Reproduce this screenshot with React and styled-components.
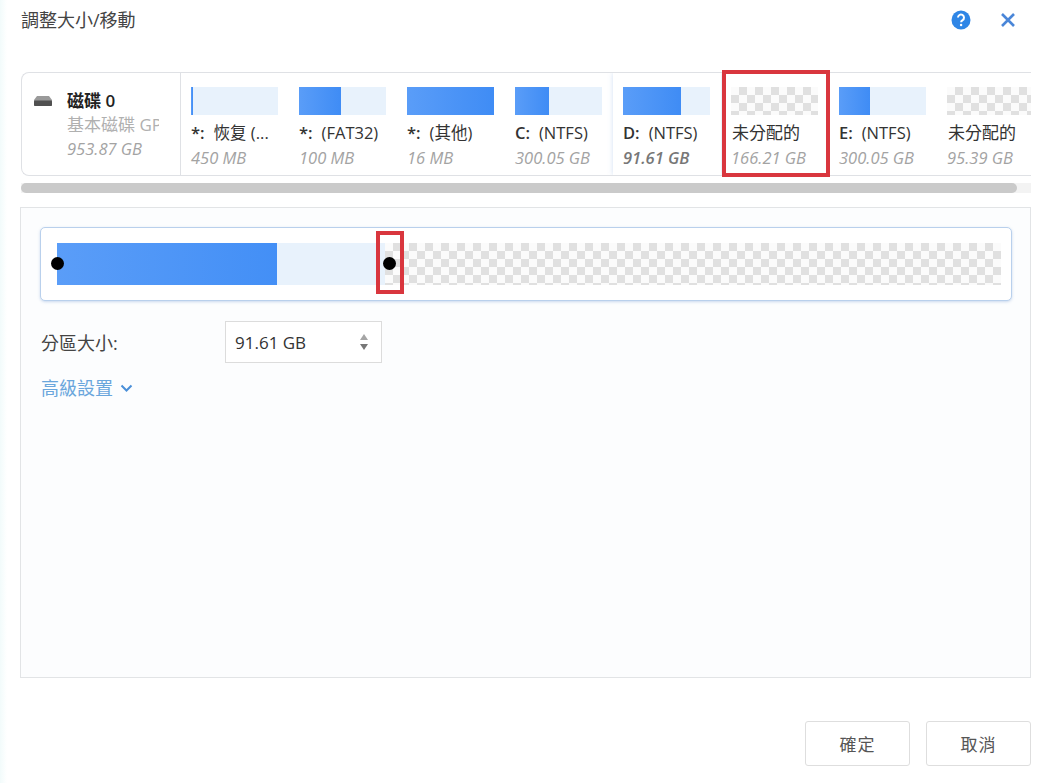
import React from "react";
import styled, { createGlobalStyle, css } from "styled-components";

const GlobalStyle = createGlobalStyle`
  html, body {
    margin: 0;
    padding: 0;
    background: #fff;
  }
  body {
    font-family: "Open Sans", "Noto Sans CJK TC", sans-serif;
    color: #333;
  }
`;

const checker = css`
  background-color: #fff;
  background-image: conic-gradient(#e0e0e0 25%, #fbfbfb 0 50%, #e0e0e0 0 75%, #fbfbfb 0);
  background-size: 16px 16px;
`;

const Page = styled.div`
  width: 1051px;
  height: 783px;
  box-sizing: border-box;
  padding: 0 20px 0 20px;
  display: flex;
  flex-direction: column;
  overflow: hidden;
  background: linear-gradient(90deg, #f2fbfb 0, #ffffff 7px);
`;

const Header = styled.div`
  height: 72px;
  flex: none;
  display: flex;
  justify-content: space-between;
  align-items: flex-start;
  padding-left: 1px;
`;

const Title = styled.div`
  font-size: 18px;
  line-height: 24px;
  margin-top: 8px;
  color: #444;
`;

const HeaderIcons = styled.div`
  display: flex;
  align-items: center;
  gap: 29px;
  margin-top: 10px;
  padding-right: 15px;
`;

const Strip = styled.div`
  flex: none;
  height: 104px;
  margin-left: 1px;
  box-sizing: border-box;
  display: flex;
  border: 1px solid #dfe1e5;
  border-right: none;
  border-radius: 8px 0 0 8px;
  background: #fff;
  overflow: visible;
  position: relative;
`;

const DiskCell = styled.div`
  flex: none;
  width: 159px;
  box-sizing: border-box;
  border-right: 1px solid #dfe1e5;
  display: flex;
  padding: 16px 0 0 12px;
  gap: 15px;
`;

const DiskIcon = styled.svg`
  flex: none;
  margin-top: 7px;
`;

const DiskText = styled.div`
  min-width: 0;
  width: 92px;
  overflow: hidden;
`;

const DiskName = styled.div`
  font-size: 17px;
  line-height: 24px;
  font-weight: 600;
  color: #222;
  white-space: nowrap;
`;

const DiskType = styled.div`
  font-size: 17px;
  line-height: 24px;
  color: #b0b0b0;
  white-space: nowrap;
`;

const DiskSize = styled.div`
  font-size: 16.5px;
  line-height: 24px;
  font-style: italic;
  color: #a3a3a3;
  white-space: nowrap;
`;

const Parts = styled.div`
  flex: 1;
  min-width: 0;
  display: flex;
  overflow: hidden;
`;

const PartCell = styled.div`
  flex: none;
  width: 108px;
  box-sizing: border-box;
  padding: 14px 0 0 10px;
  position: relative;
  ${(p) =>
    p.$selected &&
    css`
      box-shadow: 0 0 5px rgba(120, 160, 220, 0.35);
      background: #fff;
    `}
`;

const PartBar = styled.div`
  width: 87px;
  height: 28px;
  background: #e8f2fc;
  ${(p) => p.$free && checker}
`;

const PartFill = styled.div`
  height: 100%;
  background: linear-gradient(90deg, #5a9df8, #3f8cf5);
`;

const PartLabel = styled.div`
  margin-top: 7px;
  font-size: 16.5px;
  line-height: 22px;
  color: #333;
  white-space: nowrap;
`;

const DriveLetter = styled.b`
  font-weight: 600;
  margin-right: 9px;
`;

const FreeName = styled.span`
  font-size: 17px;
  margin-left: 1px;
`;

const PartSize = styled.div`
  font-size: 16.5px;
  line-height: 24px;
  margin-top: 2px;
  font-style: italic;
  white-space: nowrap;
  color: ${(p) => (p.$selected ? "#777" : "#a3a3a3")};
  font-weight: ${(p) => (p.$selected ? 600 : 400)};
`;

const RedFrame = styled.div`
  position: absolute;
  box-sizing: border-box;
  border: 4px solid #d9363e;
  pointer-events: none;
`;

const StripFrame = styled(RedFrame)`
  left: 700px;
  top: -3px;
  width: 108px;
  height: 107px;
`;

const Scrollbar = styled.div`
  flex: none;
  margin: 7px 0 0 1px;
  height: 10px;
  background: #f3f3f3;
`;

const ScrollThumb = styled.div`
  width: 996px;
  height: 100%;
  border-radius: 5px;
  background: #cacaca;
`;

const Panel = styled.div`
  flex: none;
  height: 471px;
  margin-top: 14px;
  box-sizing: border-box;
  border: 1px solid #e2e4e6;
  background: #fcfdfe;
  padding: 19px 18px 0 19px;
`;

const SliderBox = styled.div`
  height: 74px;
  box-sizing: border-box;
  border: 1px solid #b9d0ec;
  border-radius: 5px;
  background: #fff;
  box-shadow: 0 1px 3px rgba(110, 150, 210, 0.35);
  padding: 15px 10px 0 16px;
`;

const Track = styled.div`
  position: relative;
  height: 42px;
  display: flex;
`;

const TrackUsed = styled.div`
  flex: none;
  width: 220px;
  background: linear-gradient(90deg, #5a9df8, #438ff6);
`;

const TrackEmpty = styled.div`
  flex: none;
  width: 108px;
  background: #e8f2fc;
`;

const TrackFree = styled.div`
  flex: 1;
  ${checker}
`;

const Handle = styled.div`
  position: absolute;
  top: 14px;
  left: ${(p) => p.$left}px;
  width: 13px;
  height: 13px;
  border-radius: 50%;
  background: #000;
`;

const HandleFrame = styled(RedFrame)`
  left: 319px;
  top: -12px;
  width: 28px;
  height: 63px;
`;

const FieldRow = styled.div`
  display: flex;
  align-items: center;
  margin-top: 20px;
  padding-left: 1px;
`;

const FieldLabel = styled.div`
  width: 184px;
  font-size: 18px;
  color: #444;
`;

const SizeInput = styled.div`
  width: 157px;
  height: 42px;
  box-sizing: border-box;
  border: 1px solid #dcdcdc;
  background: #fff;
  display: flex;
  align-items: center;
  justify-content: space-between;
  padding: 0 12px 0 9px;
  font-size: 17px;
  color: #333;
`;

const Spinner = styled.svg`
  flex: none;
`;

const AdvancedLink = styled.div`
  display: flex;
  align-items: center;
  gap: 7px;
  margin-top: 13px;
  padding-left: 1px;
  font-size: 18px;
  line-height: 24px;
  color: #6aa6dc;
`;

const Footer = styled.div`
  flex: none;
  display: flex;
  justify-content: flex-end;
  gap: 16px;
  margin-top: 43px;
`;

const Button = styled.div`
  width: 105px;
  height: 45px;
  box-sizing: border-box;
  border: 1px solid #dedede;
  border-radius: 3px;
  background: #fff;
  display: flex;
  align-items: center;
  justify-content: center;
  font-size: 17px;
  letter-spacing: 1px;
  color: #555;
`;

const parts = [
  { letter: "*:", name: "恢复 (...", size: "450 MB", fill: 2 },
  { letter: "*:", name: "(FAT32)", size: "100 MB", fill: 42 },
  { letter: "*:", name: "(其他)", size: "16 MB", fill: 87 },
  { letter: "C:", name: "(NTFS)", size: "300.05 GB", fill: 34 },
  { letter: "D:", name: "(NTFS)", size: "91.61 GB", fill: 58, selected: true },
  { name: "未分配的", size: "166.21 GB", free: true },
  { letter: "E:", name: "(NTFS)", size: "300.05 GB", fill: 31 },
  { name: "未分配的", size: "95.39 GB", free: true },
];

export default function App() {
  return (
    <Page>
      <GlobalStyle />
      <Header>
        <Title>調整大小/移動</Title>
        <HeaderIcons>
          <svg width="20" height="20" viewBox="0 0 20 20">
            <circle cx="10" cy="10" r="9.5" fill="#2f86e6" />
            <path d="M7 7.6a3 3 0 1 1 4.6 2.5c-1 .6-1.5 1.1-1.5 2.2" fill="none" stroke="#fff" strokeWidth="2" />
            <circle cx="10.1" cy="15" r="1.2" fill="#fff" />
          </svg>
          <svg width="16" height="16" viewBox="0 0 16 16">
            <path d="M2 2l12 12M14 2L2 14" stroke="#4a86d8" strokeWidth="2.6" />
          </svg>
        </HeaderIcons>
      </Header>

      <Strip>
        <DiskCell>
          <DiskIcon width="18" height="10" viewBox="0 0 18 10">
            <path d="M3 0h12l3 4v5a1 1 0 0 1-1 1H1a1 1 0 0 1-1-1V4z" fill="#9a9a9a" />
            <rect x="0" y="4.5" width="18" height="5.5" rx="1" fill="#505050" />
          </DiskIcon>
          <DiskText>
            <DiskName>磁碟 0</DiskName>
            <DiskType>基本磁碟 GPT</DiskType>
            <DiskSize>953.87 GB</DiskSize>
          </DiskText>
        </DiskCell>
        <Parts>
          {parts.map((part, i) => (
            <PartCell key={i} $selected={part.selected}>
              <PartBar $free={part.free}>
                {!part.free && <PartFill style={{ width: `${part.fill}px` }} />}
              </PartBar>
              <PartLabel>
                {part.letter && <DriveLetter>{part.letter}</DriveLetter>}
                {part.free ? <FreeName>{part.name}</FreeName> : part.name}
              </PartLabel>
              <PartSize $selected={part.selected}>{part.size}</PartSize>
            </PartCell>
          ))}
        </Parts>
        <StripFrame />
      </Strip>

      <Scrollbar>
        <ScrollThumb />
      </Scrollbar>

      <Panel>
        <SliderBox>
          <Track>
            <TrackUsed />
            <TrackEmpty />
            <TrackFree />
            <Handle $left={-6} />
            <Handle $left={326} />
            <HandleFrame />
          </Track>
        </SliderBox>
        <FieldRow>
          <FieldLabel>分區大小:</FieldLabel>
          <SizeInput>
            91.61 GB
            <Spinner width="10" height="16" viewBox="0 0 10 16">
              <path d="M5 0l4 6H1z" fill="#a5a5a5" />
              <path d="M5 16l4-6H1z" fill="#777" />
            </Spinner>
          </SizeInput>
        </FieldRow>
        <AdvancedLink>
          高級設置
          <svg width="13" height="9" viewBox="0 0 13 9">
            <path d="M1.5 1.5l5 5 5-5" fill="none" stroke="#4a8fd8" strokeWidth="2" />
          </svg>
        </AdvancedLink>
      </Panel>

      <Footer>
        <Button>確定</Button>
        <Button>取消</Button>
      </Footer>
    </Page>
  );
}
